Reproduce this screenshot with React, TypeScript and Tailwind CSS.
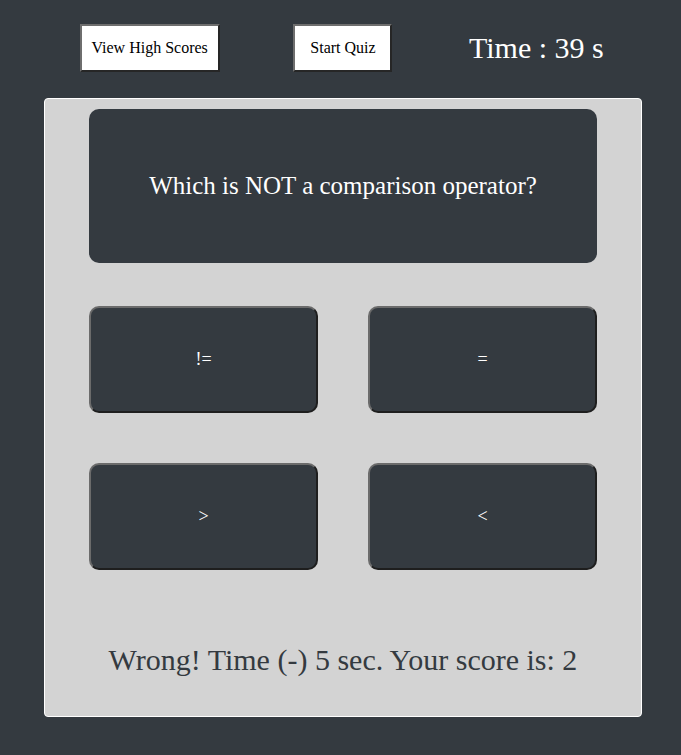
import React from 'react';

const ANSWERS = ['!=', '=', '>', '<'];

export default function App() {
    return (
        <div className="min-h-[755px] w-[681px] bg-[#343a40] pt-6 font-['Liberation_Serif',serif]">
            <div className="ml-[53px] grid w-[580px] grid-cols-3 items-center">
                <div className="flex justify-center">
                    <button className="h-12 w-[140px] border-2 border-t-[#6e6e6e] border-l-[#6e6e6e] border-b-[#262626] border-r-[#262626] bg-white text-[16px] text-black">
                        View High Scores
                    </button>
                </div>
                <div className="flex justify-center">
                    <button className="h-12 w-[99px] border-2 border-t-[#6e6e6e] border-l-[#6e6e6e] border-b-[#262626] border-r-[#262626] bg-white text-[16px] text-black">
                        Start Quiz
                    </button>
                </div>
                <div className="text-center text-[30px] leading-[48px] text-white">Time : 39 s</div>
            </div>

            <div className="mt-[26px] ml-[44px] flex h-[619px] w-[598px] flex-col items-center rounded-[4px] border border-white bg-[#d3d3d3] pt-[10px]">
                <div className="flex h-[154px] w-[508px] items-center justify-center rounded-[10px] bg-[#343a40] text-[25px] text-white">
                    Which is NOT a comparison operator?
                </div>
                <div className="mt-[43px] grid w-[508px] grid-cols-2 gap-x-[50px] gap-y-[50px]">
                    {ANSWERS.map((a) => (
                        <button
                            key={a}
                            className="h-[107px] rounded-[10px] border-2 border-t-[#6b6b6b] border-l-[#6b6b6b] border-b-[#1e1e1e] border-r-[#1e1e1e] bg-[#343a40] text-[18px] text-white"
                        >
                            {a}
                        </button>
                    ))}
                </div>
                <p className="mt-[67px] text-[30px] leading-[45px] text-[#343a40]">Wrong! Time (-) 5 sec. Your score is: 2</p>
            </div>
        </div>
    );
}
